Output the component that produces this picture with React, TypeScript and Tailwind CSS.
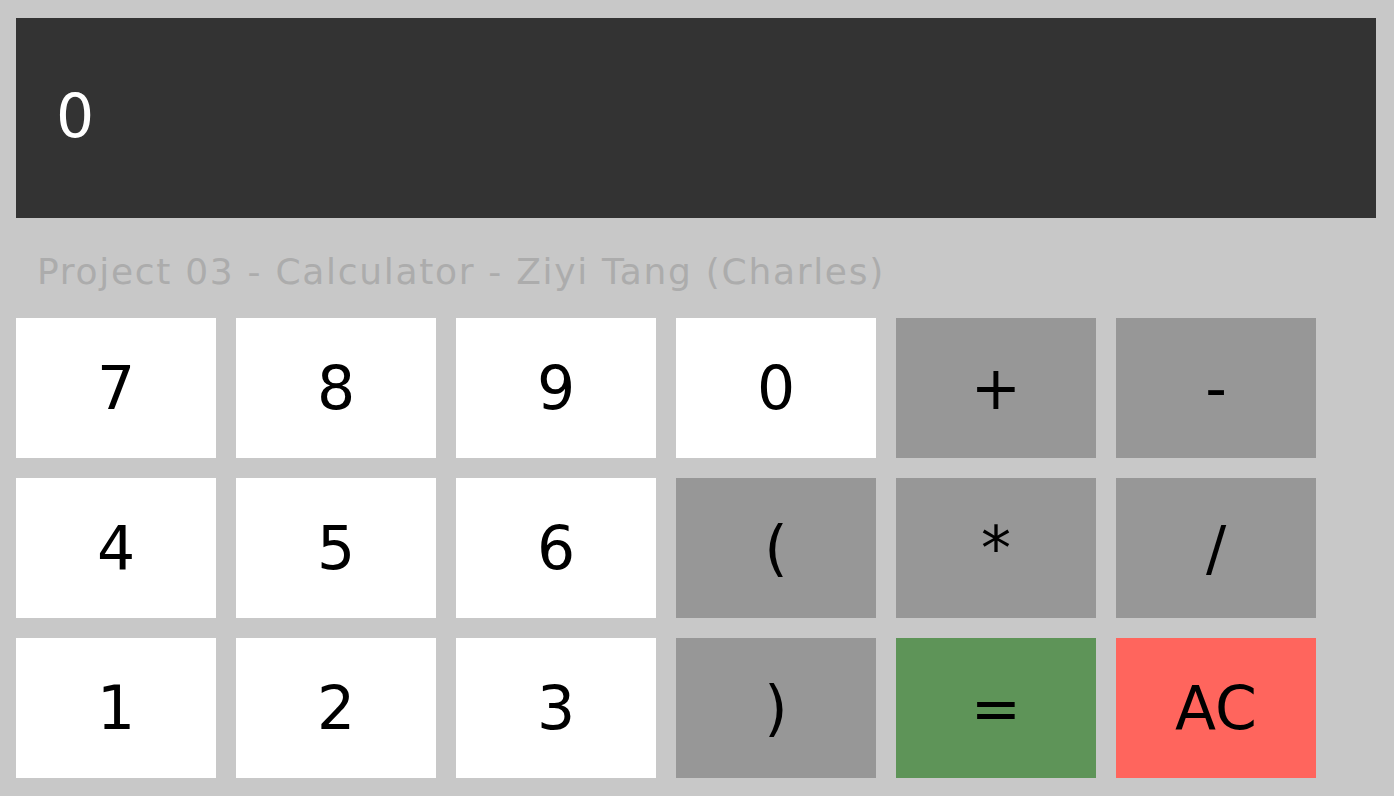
const keys: { label: string; tone: "digit" | "op" | "eq" | "clear" }[] = [
  { label: "7", tone: "digit" },
  { label: "8", tone: "digit" },
  { label: "9", tone: "digit" },
  { label: "0", tone: "digit" },
  { label: "+", tone: "op" },
  { label: "-", tone: "op" },
  { label: "4", tone: "digit" },
  { label: "5", tone: "digit" },
  { label: "6", tone: "digit" },
  { label: "(", tone: "op" },
  { label: "*", tone: "op" },
  { label: "/", tone: "op" },
  { label: "1", tone: "digit" },
  { label: "2", tone: "digit" },
  { label: "3", tone: "digit" },
  { label: ")", tone: "op" },
  { label: "=", tone: "eq" },
  { label: "AC", tone: "clear" },
];

const toneClass = {
  digit: "bg-white",
  op: "bg-[#979797]",
  eq: "bg-[#5e9458]",
  clear: "bg-[#ff655d]",
};

export default function App() {
  return (
    <div className="min-h-[796px] bg-[#c8c8c8] pl-4 pr-[18px] pt-[18px] font-['DejaVu_Sans',sans-serif]">
      <div className="flex h-[200px] items-center bg-[#333333] px-10 pb-1 text-[60px] text-white">0</div>
      <div className="flex h-[100px] items-center pl-[21px] pt-2 text-[36px] tracking-[1.7px] text-[#acacac]">
        Project 03 - Calculator - Ziyi Tang (Charles)
      </div>
      <div className="grid grid-cols-[repeat(6,200px)] gap-5">
        {keys.map((k) => (
          <button
            key={k.label}
            className={`flex h-[140px] items-center justify-center text-[60px] text-black ${toneClass[k.tone]}`}
          >
            {k.label}
          </button>
        ))}
      </div>
    </div>
  );
}
